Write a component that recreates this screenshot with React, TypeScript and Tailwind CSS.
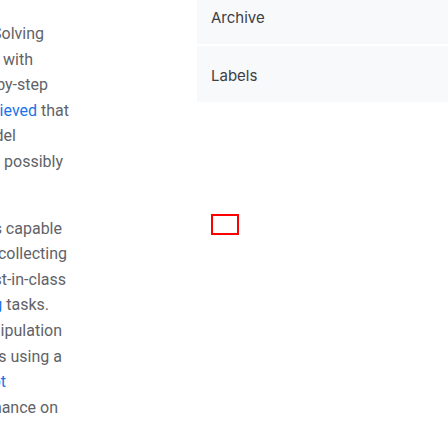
const linkCls = 'text-[#1a73e8]';

type Line = { end: number; parts: { text: string; link?: boolean }[] };

const intro: Line[] = [
  { end: 44, parts: [{ text: 'and Solving' }] },
  { end: 33, parts: [{ text: 'problems with' }] },
  { end: 48, parts: [{ text: 'step-by-step' }] },
  { end: 69, parts: [{ text: 'has ' }, { text: 'achieved', link: true }, { text: ' that' }] },
  { end: 16, parts: [{ text: 'model' }] },
  { end: 63, parts: [{ text: 'is possibly' }] },
];

const robotics: Line[] = [
  { end: 62, parts: [{ text: 'is capable' }] },
  { end: 67, parts: [{ text: 'and collecting' }] },
  { end: 66, parts: [{ text: 'best-in-class' }] },
  { end: 49, parts: [{ text: 'planning', link: true }, { text: ' tasks.' }] },
  { end: 62, parts: [{ text: 'manipulation' }] },
  { end: 62, parts: [{ text: 'tasks using a' }] },
  { end: 6, parts: [{ text: 'robot', link: true }] },
  { end: 58, parts: [{ text: 'performance on' }] },
];

function Paragraph({ lines, className }: { lines: Line[]; className?: string }) {
  return (
    <div className={className}>
      {lines.map((line, i) => (
        <div className="flex h-[25.6px] justify-end whitespace-nowrap" key={i} style={{ width: line.end }}>
          <span>
            {line.parts.map((part, j) => (
              <span className={part.link ? linkCls : undefined} key={j}>
                {part.text}
              </span>
            ))}
          </span>
        </div>
      ))}
    </div>
  );
}

export default function App() {
  return (
    <div className="flex h-[448px] w-[448px] overflow-hidden bg-white">
      <div className="w-[197px] shrink-0 pt-[21px] font-['Roboto',sans-serif] text-[16px] font-normal leading-[25.6px] text-[#5f6368]">
        <Paragraph lines={intro} />
        <Paragraph className="mt-[41px]" lines={robotics} />
      </div>

      <div className="flex flex-1 flex-col">
        <div className="-mt-3 flex flex-col gap-[2px] font-['Inter',sans-serif] text-[15px] font-normal text-[#3c4043]">
          <div className="flex h-14 items-center bg-[#f8f9fa] px-[14px] pt-1">Archive</div>
          <div className="flex h-14 items-center bg-[#f8f9fa] px-[14px] pt-1">Labels</div>
        </div>
        <div className="ml-[14px] mt-[112px] h-[21px] w-[28px] border-2 border-[#ff0000]" />
      </div>
    </div>
  );
}
